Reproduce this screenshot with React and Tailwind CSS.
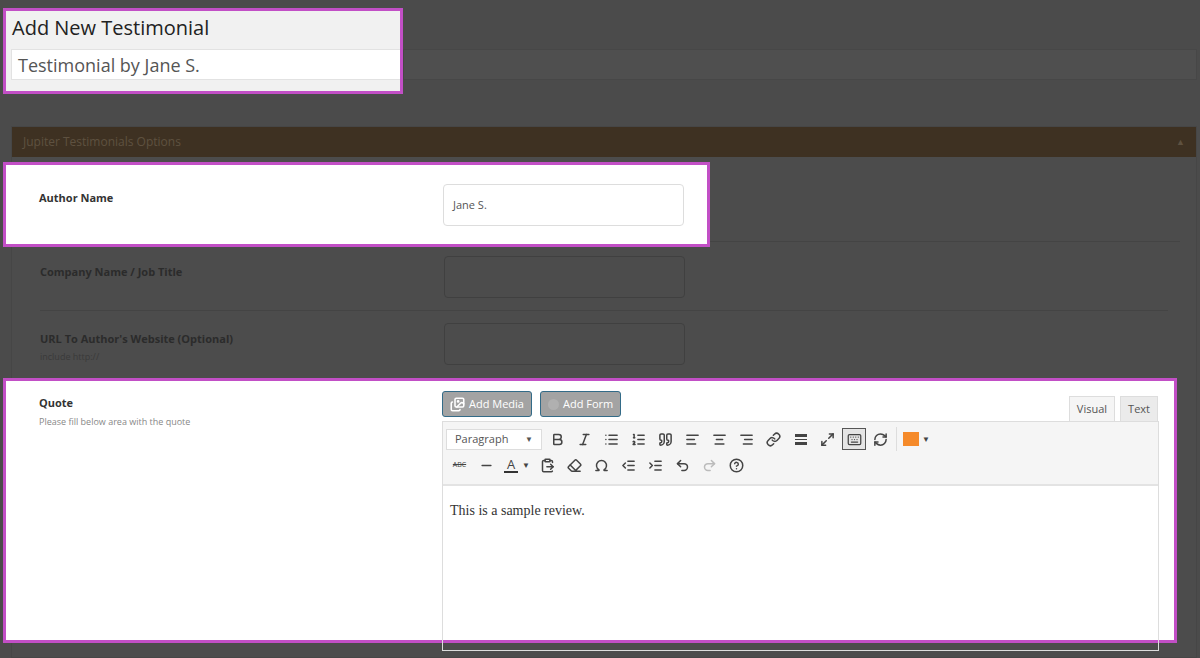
import React from "react";
import { Bold, Italic, List, ListOrdered, Quote, AlignLeft, AlignCenter, AlignRight, Link, Maximize2, Keyboard, RefreshCw, Minus, ClipboardPaste, Eraser, Omega, IndentDecrease, IndentIncrease, Undo2, Redo2, CircleHelp, Images } from "lucide-react";

const F = { fontFamily: '"Open Sans", "Liberation Sans", sans-serif' };

function Ic({ I, cls = "text-[#444]", x }) {
  return (
    <span className="w-[27px] h-[24px] flex items-center justify-center shrink-0">
      <I size={15} strokeWidth={2.4} className={cls} />
    </span>
  );
}

export default function App() {
  return (
    <div className="w-[1200px] h-[658px] bg-[#4b4b4b] overflow-hidden" style={F}>
      {/* Title */}
      <div className="flex pt-[8px]">
        <div className="ml-[3px] w-[400px] h-[86px] border-[3px] border-[#c24fc6] bg-[#f1f1f1] shrink-0">
          <div className="pl-[6px] pt-[3px] text-[20px] leading-[28px] text-[#222]">Add New Testimonial</div>
          <div className="ml-[5px] mt-[7px] h-[31px] bg-white border border-[#e2e2e2] border-r-0 pl-[6px] text-[18px] leading-[30px] text-[#555]">Testimonial by Jane S.</div>
        </div>
        <div className="mt-[41px] h-[31px] w-[794px] bg-[#4f4f4f] border border-[#474747]" />
      </div>

      {/* Metabox */}
      <div className="ml-[11px] mt-[32px] w-[1186px] h-[532px] bg-[#4c4c4c] border border-[#464646]">
        <div className="h-[30px] bg-[#3e3122] flex items-center justify-between px-[11px]">
          <span className="text-[12px] text-[#5e5140]">Jupiter Testimonials Options</span>
          <span className="text-[9px] text-[#5e5140]">▲</span>
        </div>
        <div className="pt-[5px]">
          {/* Author */}
          <div className="flex h-[85px]">
            <div className="-ml-[9px] w-[707px] h-[85px] border-[3px] border-[#c24fc6] bg-white shrink-0 flex">
              <div className="w-[437px] pl-[33px] pt-[25px] text-[11px] font-bold text-[#333]">Author Name</div>
              <div className="mt-[19px] w-[241px] h-[42px] border border-[#ddd] rounded-[4px] pl-[9px] text-[11px] leading-[40px] text-[#555]">Jane S.</div>
            </div>
            <div className="flex-1 mr-[16px] border-b border-[#444] h-[80px]" />
          </div>
          {/* Company */}
          <div className="flex h-[64px] mx-[28px] border-b border-[#444]">
            <div className="w-[404px] pt-[17px] text-[11px] font-bold text-[#2b2b2b]">Company Name / Job Title</div>
            <div className="mt-[9px] w-[241px] h-[42px] border border-[#404040] rounded-[4px]" />
          </div>
          {/* URL */}
          <div className="flex h-[67px] mx-[28px]">
            <div className="w-[404px] pt-[20px]">
              <div className="text-[11px] font-bold text-[#2b2b2b]">URL To Author's Website (Optional)</div>
              <div className="text-[9px] text-[#3a3a3a] mt-[2px]">include http://</div>
            </div>
            <div className="mt-[12px] w-[241px] h-[42px] border border-[#404040] rounded-[4px]" />
          </div>
          {/* Quote */}
          <div className="-ml-[9px] w-[1174px] h-[265px] border-[3px] border-[#c24fc6] bg-white flex">
            <div className="w-[436px] pl-[33px] pt-[14px]">
              <div className="text-[11px] font-bold text-[#333]">Quote</div>
              <div className="text-[9px] text-[#888] mt-[3px]">Please fill below area with the quote</div>
            </div>
            <div className="w-[717px] pt-[10px]">
              <div className="flex items-start h-[30px]">
                <div className="h-[26px] px-[7px] flex items-center gap-[4px] bg-[#a3a3a3] border border-[#336b88] rounded-[3px] text-white text-[11px]">
                  <Images size={15} strokeWidth={2.5} className="text-white" /> Add Media
                </div>
                <div className="ml-[8px] h-[26px] px-[7px] flex items-center gap-[4px] bg-[#a3a3a3] border border-[#336b88] rounded-[3px] text-white text-[11px]">
                  <span className="w-[11px] h-[11px] rounded-full bg-[#b0b0b0]" /> Add Form
                </div>
                <div className="ml-auto flex mt-[5px] mr-[1px]">
                  <div className="h-[25px] px-[7px] bg-[#f5f5f5] border border-[#ddd] border-b-0 text-[11px] leading-[24px] text-[#555]">Visual</div>
                  <div className="ml-[5px] h-[25px] px-[7px] bg-[#ebebeb] border border-[#ddd] border-b-0 text-[11px] leading-[24px] text-[#555]">Text</div>
                </div>
              </div>
              <div className="border border-[#ddd] h-[230px] flex flex-col">
                <div className="h-[64px] bg-[#f5f5f5] border-b-2 border-[#e3e3e3] px-[3px] pt-[5px]">
                  <div className="flex items-center h-[24px]">
                    <div className="w-[96px] h-[21px] bg-white border border-[#ddd] flex items-center justify-between px-[8px] text-[11px] text-[#555] mr-[2px]">Paragraph <span className="text-[8px]">▼</span></div>
                    <Ic I={Bold} /><Ic I={Italic} /><Ic I={List} /><Ic I={ListOrdered} /><Ic I={Quote} /><Ic I={AlignLeft} /><Ic I={AlignCenter} /><Ic I={AlignRight} /><Ic I={Link} />
                    <span className="w-[27px] h-[24px] flex flex-col items-center justify-center gap-[2px]"><span className="w-[12px] h-[3px] bg-[#444]" /><span className="w-[12px] h-[1px] bg-[#444]" /><span className="w-[12px] h-[3px] bg-[#444]" /></span>
                    <Ic I={Maximize2} />
                    <span className="w-[24px] h-[22px] mx-[1px] border border-[#555] bg-[#e5e5e5] flex items-center justify-center"><Keyboard size={15} className="text-[#444]" /></span>
                    <Ic I={RefreshCw} />
                    <span className="w-[1px] h-[24px] bg-[#ddd] mx-[2px]" />
                    <span className="ml-[4px] w-[16px] h-[14px] bg-[#f58a2a]" />
                    <span className="ml-[3px] text-[8px] text-[#444]">▼</span>
                  </div>
                  <div className="flex items-center h-[28px]">
                    <span className="w-[27px] text-center text-[7px] text-[#444] line-through">ABC</span>
                    <Ic I={Minus} />
                    <span className="w-[22px] flex flex-col items-center"><span className="text-[13px] leading-[13px] text-[#444]">A</span><span className="w-[14px] h-[2px] bg-[#333]" /></span>
                    <span className="text-[8px] text-[#444] w-[12px]">▼</span>
                    <Ic I={ClipboardPaste} /><Ic I={Eraser} /><Ic I={Omega} /><Ic I={IndentDecrease} /><Ic I={IndentIncrease} /><Ic I={Undo2} /><Ic I={Redo2} cls="text-[#bbb]" /><Ic I={CircleHelp} />
                  </div>
                </div>
                <div className="flex-1 px-[7px] pt-[14px] text-[14px] text-[#333]" style={{ fontFamily: '"Liberation Serif", "DejaVu Serif", serif' }}>This is a sample review.</div>
              </div>
            </div>
          </div>
        </div>
      </div>
    </div>
  );
}
